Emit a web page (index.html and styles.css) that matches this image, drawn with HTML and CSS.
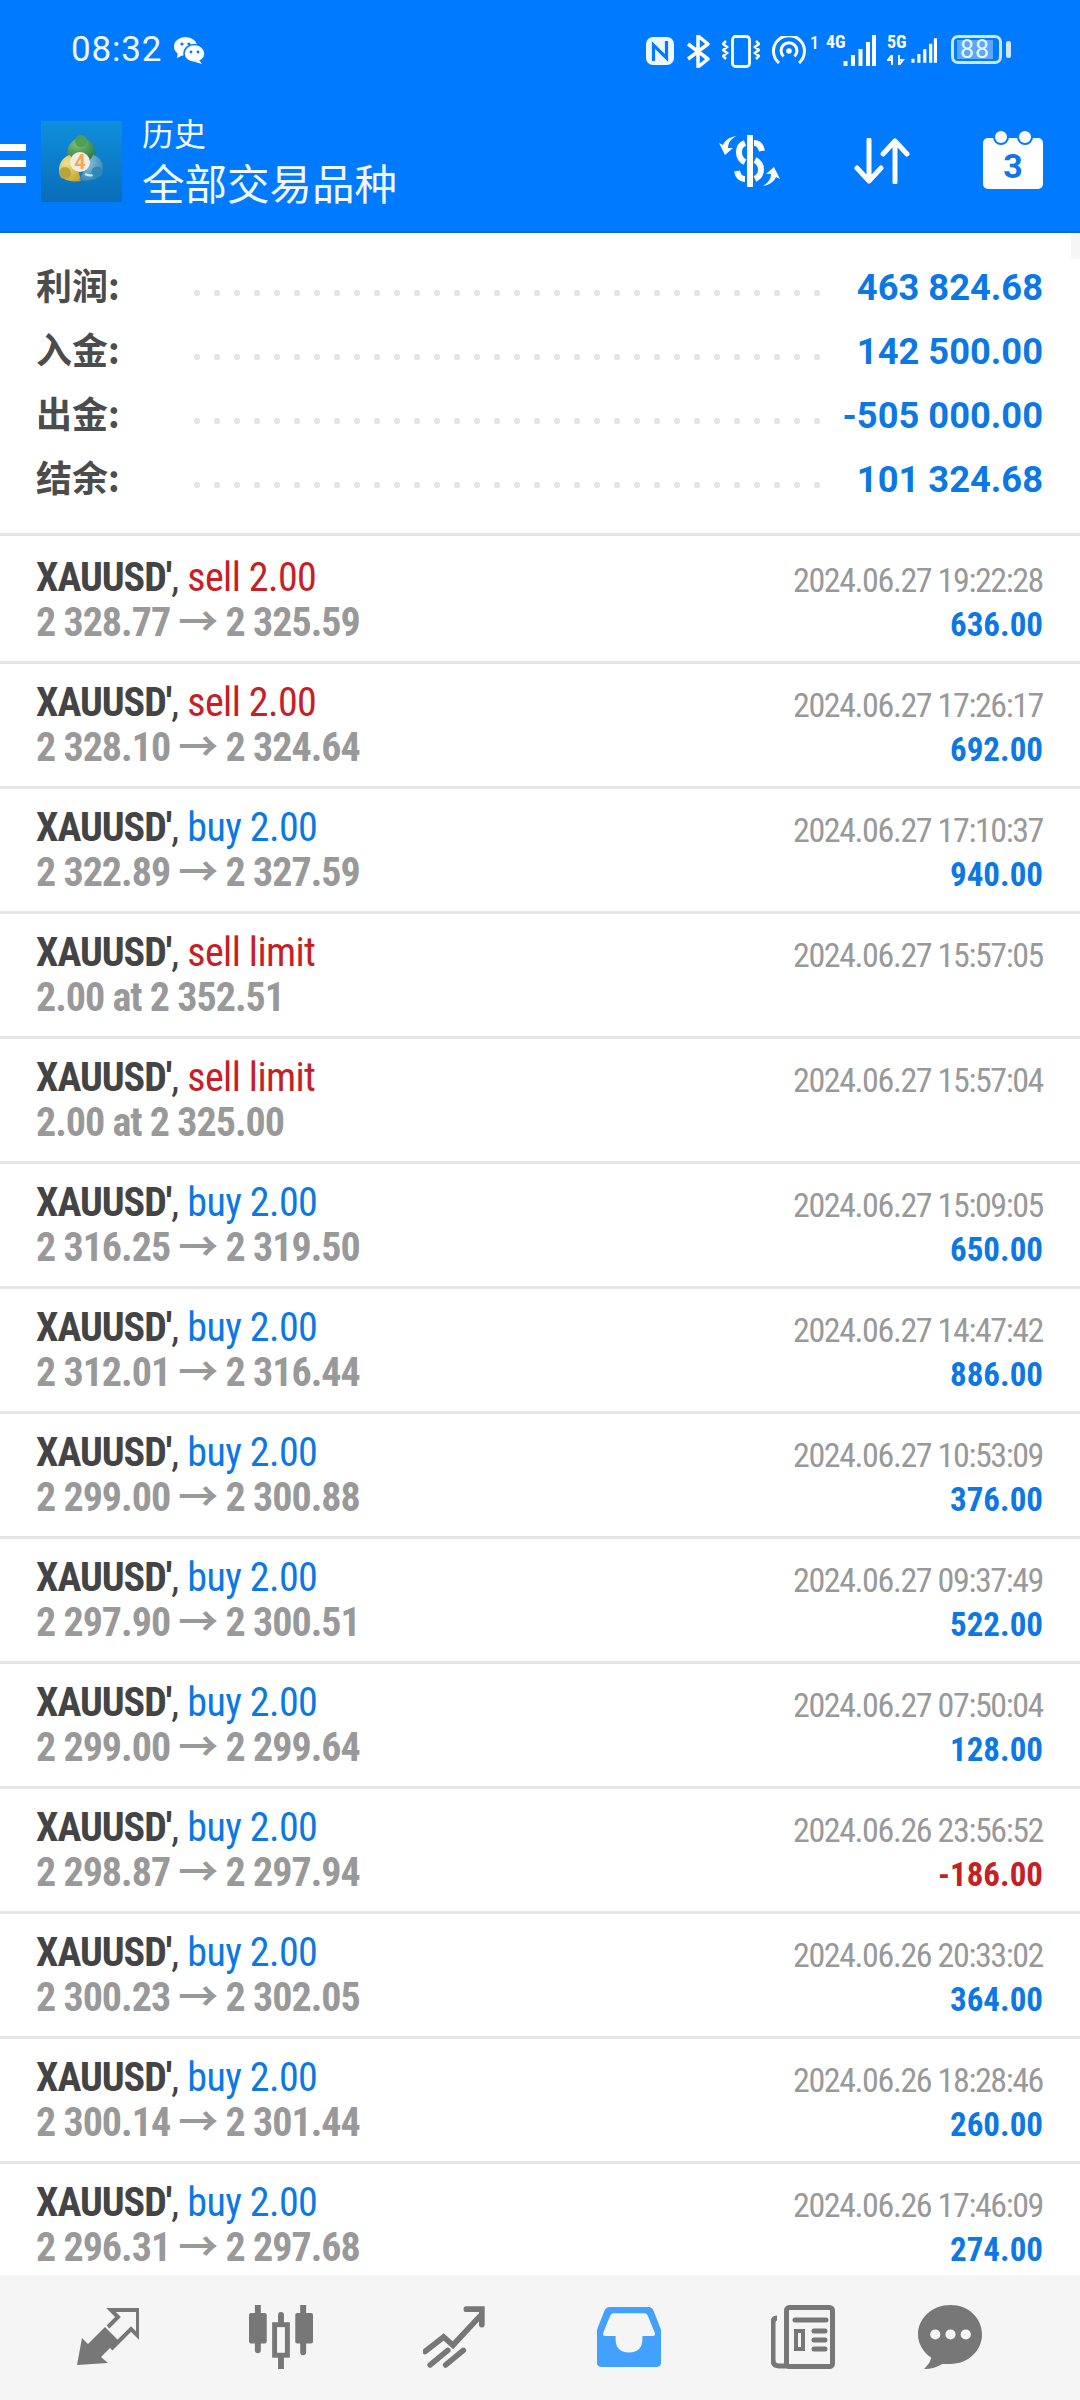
FILE: index.html
```html
<!DOCTYPE html>
<html lang="zh">
<head>
<meta charset="utf-8">
<title>历史</title>
<link rel="stylesheet" href="styles.css">
</head>
<body>
<div class="app">
  <header class="header">
    <div class="status">
      <div class="status-left">
        <span class="clock">08:32</span>
        <svg class="wechat" viewBox="0 0 31 27"><ellipse cx="11.5" cy="9.5" rx="11.5" ry="9.5" fill="#fff"/><path d="M4 15l-1 6 6-3z" fill="#fff"/><circle cx="8" cy="7" r="1.6" fill="#007aff"/><circle cx="15" cy="7" r="1.6" fill="#007aff"/><ellipse cx="20.5" cy="16.5" rx="10.5" ry="9" fill="#fff" stroke="#007aff" stroke-width="1.5"/><path d="M25 23l3 4-7-2z" fill="#fff"/><circle cx="17" cy="15" r="1.4" fill="#007aff"/><circle cx="24" cy="15" r="1.4" fill="#007aff"/></svg>
      </div>
      <div class="status-right">
        <svg class="s-nfc" viewBox="0 0 28 28"><rect width="28" height="28" rx="7" fill="#eef7ff"/><path d="M7.500 24V8l13 13V4" fill="none" stroke="#007aff" stroke-width="3.200"/></svg>
        <svg class="s-bt" viewBox="0 0 24 33"><path d="M2 9l20 15-10 8V1l10 8-20 15" fill="none" stroke="#fff" stroke-width="3.500" stroke-linejoin="round"/></svg>
        <svg class="s-vib" viewBox="0 0 38 33"><rect x="10.500" y="1.500" width="17" height="30" rx="3" fill="none" stroke="#fff" stroke-width="2.800"/><path d="M4 6l-3 3 4 3-4 3 4 3-4 3 3 3M34 6l3 3-4 3 4 3-4 3 4 3-3 3" fill="none" stroke="#fff" stroke-width="2.500"/></svg>
        <svg class="s-hot" viewBox="0 0 34 28"><path d="M7 27A15.500 15.500 0 1 1 27 27" fill="none" stroke="#fff" stroke-width="3"/><path d="M11.500 20.500A8 8 0 1 1 22.500 20.500" fill="none" stroke="#fff" stroke-width="3"/><circle cx="17" cy="15" r="2.800" fill="#fff"/></svg>
        <span class="s-one">1</span>
        <div class="signal">
          <span class="s-net">4G</span>
          <svg class="s-bars" viewBox="0 0 33 31"><path d="M2.500 31v-5M10 31V20M17.500 31V14M25 31V7M31 31V0" fill="none" stroke="#fff" stroke-width="4"/></svg>
        </div>
        <div class="signal signal-5g">
          <span class="s-net">5G</span>
          <svg class="s-updown" viewBox="0 0 18 10"><path d="M5 0v10M5 0L1 5h4M12 10V0M12 10l4-5h-4" fill="none" stroke="#fff" stroke-width="2"/></svg>
          <svg class="s-bars" viewBox="0 0 33 31"><path d="M2.500 31v-5M10 31V20M17.500 31V14M25 31V7M31 31V0" fill="none" stroke="#fff" stroke-width="4"/></svg>
        </div>
        <div class="battery"><span class="battery-level">88</span></div>
        <i class="battery-nub"></i>
      </div>
    </div>
    <div class="toolbar">
      <div class="burger"><i></i><i></i><i></i></div>
      <svg class="logo" viewBox="0 0 81 81">
        <defs>
          <linearGradient id="lg" x1="0" y1="0" x2="0" y2="1"><stop offset="0" stop-color="#0f8fdc"/><stop offset="1" stop-color="#0a6db8"/></linearGradient>
          <radialGradient id="lgr" cx=".35" cy=".3" r=".8"><stop offset="0" stop-color="#7fbe78"/><stop offset="1" stop-color="#2f7d3f"/></radialGradient>
          <radialGradient id="lye" cx=".35" cy=".3" r=".8"><stop offset="0" stop-color="#efe28a"/><stop offset="1" stop-color="#c2a52f"/></radialGradient>
          <radialGradient id="lbl" cx=".35" cy=".3" r=".8"><stop offset="0" stop-color="#8ec6e2"/><stop offset="1" stop-color="#2d7fae"/></radialGradient>
        </defs>
        <rect width="81" height="81" fill="url(#lg)"/>
        <path d="M27 38C24 26 31 17 40 17s16 9 13 21z" fill="url(#lgr)"/>
        <circle cx="40" cy="20" r="6" fill="#4d9f55"/>
        <path d="M40 60C26 62 17 57 18 47c1-7 6-12 11-13l8 14z" fill="url(#lye)"/>
        <circle cx="24" cy="52" r="6" fill="#b9a43c"/>
        <path d="M38 59C52 62 61 56 62 47c0-7-5-12-10-13l-8 14z" fill="url(#lbl)"/>
        <path d="M44 53c6 3 11 1 13-4" fill="none" stroke="#cfe8f4" stroke-width="2"/>
        <circle cx="56" cy="51" r="5.500" fill="#2f89b8"/>
        <circle cx="39" cy="41" r="10" fill="#f3ece4"/>
        <text class="logo-four" x="39" y="48">4</text>
      </svg>
      <div class="titles">
        <div class="title-small">历史</div>
        <div class="title-big">全部交易品种</div>
      </div>
      <svg class="t-dollar" viewBox="0 0 62 52"><path d="M31 1.500v49" stroke="#fff" stroke-width="6" stroke-linecap="round" fill="none"/><path d="M26 8c-8 3-8 15 0 19" stroke="#fff" stroke-width="6" fill="none"/><path d="M35 8c4 0 7 3 8 8" stroke="#fff" stroke-width="6" fill="none"/><path d="M36 25c8 4 8 15 0 19" stroke="#fff" stroke-width="6" fill="none"/><path d="M26 44c-4 0-7-3-8-8" stroke="#fff" stroke-width="6" fill="none"/><path d="M17 1C12 4 9 8 9 13l5 0-8 7L0 8l4 2C6 5 11 2 17 1z" fill="#fff"/><path d="M44 51C49 48 52 44 52 39l-5 0 8-7 6 12-4-2C55 47 50 50 44 51z" fill="#fff"/></svg>
      <svg class="t-sort" viewBox="0 0 56 46"><path d="M15 2v41M3 30l12 13 12-13M41 44V3M29 16L41 3l12 13" fill="none" stroke="#fff" stroke-width="5" stroke-linecap="round" stroke-linejoin="round"/></svg>
      <div class="calendar">
        <i class="cal-ring cal-ring-a"></i><i class="cal-ring cal-ring-b"></i>
        <span class="cal-day">3</span>
      </div>
    </div>
  </header>
  <i class="scroll-mark"></i>
  <section class="summary">
    <div class="sum-row"><span class="sum-label">利润:</span><i class="sum-dots"></i><span class="sum-value">463 824.68</span></div>
    <div class="sum-row"><span class="sum-label">入金:</span><i class="sum-dots"></i><span class="sum-value">142 500.00</span></div>
    <div class="sum-row"><span class="sum-label">出金:</span><i class="sum-dots"></i><span class="sum-value">-505 000.00</span></div>
    <div class="sum-row"><span class="sum-label">结余:</span><i class="sum-dots"></i><span class="sum-value">101 324.68</span></div>
  </section>
  <main class="list">
    <div class="row row-first"><div class="cell"><div class="line"><b class="sym">XAUUSD'</b><span class="comma">,</span> <span class="sell">sell 2.00</span></div><div class="line price">2 328.77 <span class="arrow">→</span> 2 325.59</div></div><div class="cell cell-r"><div class="line date">2024.06.27 19:22:28</div><div class="line amount">636.00</div></div></div>
    <div class="row"><div class="cell"><div class="line"><b class="sym">XAUUSD'</b><span class="comma">,</span> <span class="sell">sell 2.00</span></div><div class="line price">2 328.10 <span class="arrow">→</span> 2 324.64</div></div><div class="cell cell-r"><div class="line date">2024.06.27 17:26:17</div><div class="line amount">692.00</div></div></div>
    <div class="row"><div class="cell"><div class="line"><b class="sym">XAUUSD'</b><span class="comma">,</span> <span class="buy">buy 2.00</span></div><div class="line price">2 322.89 <span class="arrow">→</span> 2 327.59</div></div><div class="cell cell-r"><div class="line date">2024.06.27 17:10:37</div><div class="line amount">940.00</div></div></div>
    <div class="row"><div class="cell"><div class="line"><b class="sym">XAUUSD'</b><span class="comma">,</span> <span class="sell">sell limit</span></div><div class="line price">2.00 at 2 352.51</div></div><div class="cell cell-r"><div class="line date">2024.06.27 15:57:05</div></div></div>
    <div class="row"><div class="cell"><div class="line"><b class="sym">XAUUSD'</b><span class="comma">,</span> <span class="sell">sell limit</span></div><div class="line price">2.00 at 2 325.00</div></div><div class="cell cell-r"><div class="line date">2024.06.27 15:57:04</div></div></div>
    <div class="row"><div class="cell"><div class="line"><b class="sym">XAUUSD'</b><span class="comma">,</span> <span class="buy">buy 2.00</span></div><div class="line price">2 316.25 <span class="arrow">→</span> 2 319.50</div></div><div class="cell cell-r"><div class="line date">2024.06.27 15:09:05</div><div class="line amount">650.00</div></div></div>
    <div class="row"><div class="cell"><div class="line"><b class="sym">XAUUSD'</b><span class="comma">,</span> <span class="buy">buy 2.00</span></div><div class="line price">2 312.01 <span class="arrow">→</span> 2 316.44</div></div><div class="cell cell-r"><div class="line date">2024.06.27 14:47:42</div><div class="line amount">886.00</div></div></div>
    <div class="row"><div class="cell"><div class="line"><b class="sym">XAUUSD'</b><span class="comma">,</span> <span class="buy">buy 2.00</span></div><div class="line price">2 299.00 <span class="arrow">→</span> 2 300.88</div></div><div class="cell cell-r"><div class="line date">2024.06.27 10:53:09</div><div class="line amount">376.00</div></div></div>
    <div class="row"><div class="cell"><div class="line"><b class="sym">XAUUSD'</b><span class="comma">,</span> <span class="buy">buy 2.00</span></div><div class="line price">2 297.90 <span class="arrow">→</span> 2 300.51</div></div><div class="cell cell-r"><div class="line date">2024.06.27 09:37:49</div><div class="line amount">522.00</div></div></div>
    <div class="row"><div class="cell"><div class="line"><b class="sym">XAUUSD'</b><span class="comma">,</span> <span class="buy">buy 2.00</span></div><div class="line price">2 299.00 <span class="arrow">→</span> 2 299.64</div></div><div class="cell cell-r"><div class="line date">2024.06.27 07:50:04</div><div class="line amount">128.00</div></div></div>
    <div class="row"><div class="cell"><div class="line"><b class="sym">XAUUSD'</b><span class="comma">,</span> <span class="buy">buy 2.00</span></div><div class="line price">2 298.87 <span class="arrow">→</span> 2 297.94</div></div><div class="cell cell-r"><div class="line date">2024.06.26 23:56:52</div><div class="line amount loss">-186.00</div></div></div>
    <div class="row"><div class="cell"><div class="line"><b class="sym">XAUUSD'</b><span class="comma">,</span> <span class="buy">buy 2.00</span></div><div class="line price">2 300.23 <span class="arrow">→</span> 2 302.05</div></div><div class="cell cell-r"><div class="line date">2024.06.26 20:33:02</div><div class="line amount">364.00</div></div></div>
    <div class="row"><div class="cell"><div class="line"><b class="sym">XAUUSD'</b><span class="comma">,</span> <span class="buy">buy 2.00</span></div><div class="line price">2 300.14 <span class="arrow">→</span> 2 301.44</div></div><div class="cell cell-r"><div class="line date">2024.06.26 18:28:46</div><div class="line amount">260.00</div></div></div>
    <div class="row"><div class="cell"><div class="line"><b class="sym">XAUUSD'</b><span class="comma">,</span> <span class="buy">buy 2.00</span></div><div class="line price">2 296.31 <span class="arrow">→</span> 2 297.68</div></div><div class="cell cell-r"><div class="line date">2024.06.26 17:46:09</div><div class="line amount">274.00</div></div></div>
  </main>
  <nav class="nav">
    <svg class="nav-ico" viewBox="0 0 64 64"><path d="M2 60L7 33l6 6 17-17 13 13-17 17 7 6z" fill="#777"/><path d="M33 22l10-10-7-7h27v26l-7-7-20 20" fill="none" stroke="#777" stroke-width="4"/></svg>
    <svg class="nav-ico" viewBox="0 0 65 65"><path d="M9 0v46M55 0v48" stroke="#777" stroke-width="6" stroke-linecap="round"/><rect y="8" width="18" height="31" rx="2" fill="#777"/><rect x="47" y="8" width="18" height="31" rx="2" fill="#777"/><path d="M32.500 10v54" stroke="#777" stroke-width="6" stroke-linecap="round"/><rect x="26" y="20" width="13" height="31" fill="#f5f5f5" stroke="#777" stroke-width="5"/></svg>
    <svg class="nav-ico" viewBox="0 0 62 60"><path d="M2 44l18-14 9 8 26-28M42 3h15v15" fill="none" stroke="#777" stroke-width="5.500" stroke-linecap="round"/><path d="M7 57l17-14M22 57l17-14" fill="none" stroke="#777" stroke-width="5.500" stroke-linecap="round"/></svg>
    <svg class="nav-ico" viewBox="0 0 62 58"><path d="M12 0h38q3 0 5 4l7 18v32q0 4-4 4H4q-4 0-4-4V22L7 4q2-4 5-4z" fill="#42a0ff"/><path d="M16 6h30q2 0 3 2l7 17q1 3-2 3H44v3q0 13-13 13T18 31v-3H8q-3 0-2-3l7-17q1-2 3-2z" fill="#f5f5f5"/></svg>
    <svg class="nav-ico" viewBox="0 0 64 64"><path d="M6 13q-4 0-4 5v37q0 6 6 6h10" fill="none" stroke="#777" stroke-width="5"/><rect x="15.500" y="2.500" width="46" height="59" rx="3" fill="#f5f5f5" stroke="#777" stroke-width="5"/><path d="M24 15h31" stroke="#777" stroke-width="5" stroke-linecap="round"/><rect x="25" y="26" width="7" height="18" fill="none" stroke="#777" stroke-width="4"/><path d="M43 26h11M43 35h11M43 44h11" stroke="#777" stroke-width="5" stroke-linecap="round"/></svg>
    <svg class="nav-ico" viewBox="0 0 63 63"><path d="M32 0c18 0 31 13 31 29S49 58 32 58c-3 0-5 0-8 0-5 3-11 5-18 5 3-3 6-6 7-11C5 46 0 38 0 29 0 13 14 0 32 0z" fill="#777"/><circle cx="17" cy="29" r="5" fill="#f5f5f5"/><circle cx="32" cy="29" r="5" fill="#f5f5f5"/><circle cx="47" cy="29" r="5" fill="#f5f5f5"/></svg>
  </nav>
</div>
</body>
</html>
```

FILE: styles.css
```css
* { box-sizing: border-box; }
html, body { margin: 0; padding: 0; background: #fff; }
body { font-family: Roboto, "Noto Sans CJK SC", sans-serif; }
.app { width: 1080px; height: 2400px; display: flex; flex-direction: column; overflow: hidden; position: relative; }

.header { height: 233px; flex: none; background: #007aff; border-bottom: 2px solid #0a6fc4; color: #fff; }
.status { height: 100px; display: flex; justify-content: space-between; padding: 35px 69px 0 71px; }
.status-left { display: flex; align-items: flex-start; }
.clock { font-size: 35px; line-height: 30px; letter-spacing: .8px; color: #eef7ff; }
.wechat { width: 31px; height: 27px; margin: 2px 0 0 12px; }
.status-right { display: flex; align-items: flex-start; }
.status-right svg { display: block; flex: none; }
.s-nfc { width: 28px; height: 28px; margin-top: 2px; }
.s-bt { width: 24px; height: 33px; margin-left: 12px; }
.s-vib { width: 38px; height: 33px; margin-left: 12px; }
.s-hot { width: 34px; height: 28px; margin-left: 12px; margin-top: 1px; }
.s-one { font-size: 18px; line-height: 16px; font-weight: 500; margin-left: 4px; width: 16px; font-stretch: 75%; }
.signal { position: relative; width: 50px; height: 31px; }
.signal-5g { margin-left: 11px; }
.signal .s-bars { position: absolute; right: 0; top: 0; width: 33px; height: 31px; }
.s-net { position: absolute; left: 0; top: 0; font-size: 18px; line-height: 14px; font-weight: 700; font-stretch: 75%; }
.signal .s-updown { position: absolute; left: 0; top: 20px; width: 18px; height: 10px; }
.signal-5g .s-bars { width: 26px; }
.battery { width: 51px; height: 29px; margin-left: 14px; border: 3px solid #cfe6ff; border-radius: 7px; padding: 2px 3px; }
.battery-level { display: block; width: 36px; height: 19px; background: #5aa7fb; font-size: 25px; line-height: 19px; text-align: center; color: #eaf4ff; letter-spacing: 1px; }
.battery-nub { width: 5px; height: 17px; margin: 6px 0 0 4px; background: #cfe6ff; border-radius: 2px; }

.toolbar { height: 131px; display: flex; align-items: flex-start; position: relative; }
.burger { width: 26px; margin-top: 44px; display: flex; flex-direction: column; gap: 9px; flex: none; }
.burger i { display: block; height: 7px; background: #fff; }
.logo { width: 81px; height: 81px; margin: 21px 0 0 15px; flex: none; }
.logo-four { font: 700 20px Roboto, sans-serif; fill: #f0a85a; text-anchor: middle; }
.titles { margin: 14px 0 0 20px; flex: 1; }
.title-small { font-size: 32px; line-height: 36px; color: #f2f8ff; font-family: "Noto Sans CJK SC", sans-serif; }
.title-big { font-size: 42.5px; line-height: 54px; margin-top: 5px; color: #f2f8ff; font-family: "Noto Sans CJK SC", sans-serif; }
.t-dollar { width: 62px; height: 52px; margin-top: 35px; flex: none; }
.t-sort { width: 56px; height: 46px; margin: 38px 0 0 73px; flex: none; }
.calendar { width: 60px; height: 51px; margin: 38px 37px 0 73px; background: #fff; border-radius: 5px; position: relative; display: flex; align-items: center; justify-content: center; flex: none; }
.cal-ring { position: absolute; top: -7px; width: 12px; height: 12px; border-radius: 50%; background: #fff; box-shadow: 0 0 0 2px #007aff; }
.cal-ring-a { left: 12px; }
.cal-ring-b { right: 12px; }
.cal-day { font-size: 34px; line-height: 40px; font-weight: 700; color: #1473e6; margin-top: 4px; }

.scroll-mark { position: absolute; right: 0; top: 233px; width: 9px; height: 26px; background: #f6f6f6; border-radius: 2px 0 0 2px; }

.summary { height: 303px; flex: none; padding-top: 22px; border-bottom: 3px solid #e6e6e6; }
.sum-row { height: 64px; display: flex; align-items: center; padding: 0 37px 0 36px; }
.sum-label { width: 158px; flex: none; font-family: "Noto Sans CJK SC", sans-serif; font-weight: 700; font-size: 36px; line-height: 44px; margin-top: -6px; color: #4c4c4c; }
.sum-dots { width: 630px; height: 6px; flex: none; margin-top: 11px; background-image: radial-gradient(circle at 3px 3px, #e5e5e5 3px, transparent 3.5px); background-size: 20px 6px; background-repeat: repeat-x; }
.sum-value { flex: 1; text-align: right; font-size: 36.300px; font-weight: 700; color: #0b78e3; white-space: nowrap; }

.list { flex: 1; overflow: hidden; }
.row { height: 125px; padding: 16px 37px 0 36px; border-bottom: 3px solid #e6e6e6; display: flex; justify-content: space-between; }
.row-first { height: 128px; padding-top: 19px; }
.cell { display: flex; flex-direction: column; }
.cell-r { align-items: flex-end; padding-top: 3px; }
.line { font-size: 40px; line-height: 45px; white-space: nowrap; font-stretch: 75%; letter-spacing: -1px; }
.sym { font-weight: 700; color: #444; }
.comma { color: #444; }
.sell { color: #c62026; letter-spacing: -.6px; margin-left: 1px; }
.buy { color: #0b78e3; letter-spacing: -.6px; margin-left: 1px; }
.price { font-weight: 700; color: #999; }
.arrow { font-weight: 700; }
.date { font-size: 34px; color: #999; letter-spacing: -1.4px; }
.amount { font-size: 33px; line-height: 43px; font-weight: 700; color: #0b78e3; letter-spacing: 0; }
.loss { color: #c62026; }

.nav { height: 125px; flex: none; background: #f5f5f5; display: grid; grid-template-columns: 174px 174px 174px 174px 174px 120px; padding-left: 20px; align-items: center; justify-items: center; }
.nav-ico { width: 64px; height: 64px; display: block; margin-top: -2px; }
```
